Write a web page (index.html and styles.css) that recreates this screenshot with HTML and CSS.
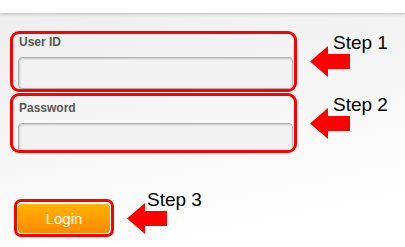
FILE: index.html
```html
<!DOCTYPE html>
<html>
<head>
<meta charset="utf-8">
<link rel="stylesheet" href="styles.css">
</head>
<body>
<div class="topbar"></div>
<main class="content">
  <div class="row row-first">
    <div class="mark field">
      <label class="label">User ID</label>
      <div class="input"></div>
    </div>
    <div class="note">
      <span class="step">Step 1</span>
      <svg class="arrow" width="40" height="31" viewBox="0 0 40 31"><path d="M0 15.5 L18 0 L18 8 L40 8 L40 23 L18 23 L18 31 Z" fill="#ff0000"/></svg>
    </div>
  </div>
  <div class="row">
    <div class="mark field field-second">
      <label class="label">Password</label>
      <div class="input"></div>
    </div>
    <div class="note">
      <span class="step">Step 2</span>
      <svg class="arrow" width="40" height="31" viewBox="0 0 40 31"><path d="M0 15.5 L18 0 L18 8 L40 8 L40 23 L18 23 L18 31 Z" fill="#ff0000"/></svg>
    </div>
  </div>
  <div class="row row-login">
    <div class="mark login-mark">
      <button class="login">Login</button>
    </div>
    <div class="note note-login">
      <span class="step">Step 3</span>
      <svg class="arrow" width="40" height="31" viewBox="0 0 40 31"><path d="M0 15.5 L18 0 L18 8 L40 8 L40 23 L18 23 L18 31 Z" fill="#ff0000"/></svg>
    </div>
  </div>
</main>
</body>
</html>
```

FILE: styles.css
```css
* { box-sizing: border-box; }
html, body { margin: 0; padding: 0; }
body {
  width: 405px;
  height: 247px;
  overflow: hidden;
  font-family: "Liberation Sans", Arial, sans-serif;
  background: linear-gradient(168deg, #ededed 0%, #f6f6f6 45%, #ffffff 85%);
}
.topbar {
  height: 13px;
  background: #ffffff;
  box-shadow: 0 1px 3px rgba(0, 0, 0, 0.22);
  position: relative;
}
.content {
  padding: 18px 0 0 10px;
  display: flex;
  flex-direction: column;
}
.row {
  display: flex;
  align-items: center;
}
.row + .row { margin-top: 1px; }
.row-login { margin-top: 46px !important; margin-left: 4px; }
.mark {
  border: 3px solid #ff0000;
  border-radius: 9px;
  overflow: hidden;
}
.field {
  width: 287px;
  height: 61px;
  padding: 1px 1px 0 5px;
  display: flex;
  flex-direction: column;
}
.field-second {
  height: 60px;
  padding-top: 5px;
}
.label {
  font-size: 12px;
  font-weight: bold;
  line-height: 14px;
  color: #575757;
  padding-left: 1px;
}
.input {
  margin-top: 8px;
  width: 275px;
  height: 32px;
  flex: none;
  background: #f2f2f2;
  border: 1px solid #b3b3b3;
  border-radius: 4px;
  box-shadow: inset 1px 1px 2px rgba(0, 0, 0, 0.18);
}
.note {
  display: flex;
  flex-direction: column;
  margin-left: 13px;
  margin-top: -14px;
}
.step {
  font-size: 19px;
  line-height: 22px;
  color: #000;
  padding-left: 23px;
}
.note-login .step { padding-left: 20px; }
.arrow {
  display: block;
  margin-top: -8px;
}
.login-mark {
  width: 100px;
  height: 38px;
  border-radius: 7px;
  padding-top: 1px;
}
.login {
  display: block;
  width: 94px;
  height: 31px;
  margin: 0;
  padding: 0;
  border: 1px solid #ffffff;
  border-radius: 5px;
  background: linear-gradient(to bottom, #ffb400 0%, #ff9a00 60%, #ff8a00 100%);
  color: #ffffff;
  font-family: "Liberation Sans", Arial, sans-serif;
  font-size: 15px;
  line-height: 29px;
  text-align: center;
}
```
